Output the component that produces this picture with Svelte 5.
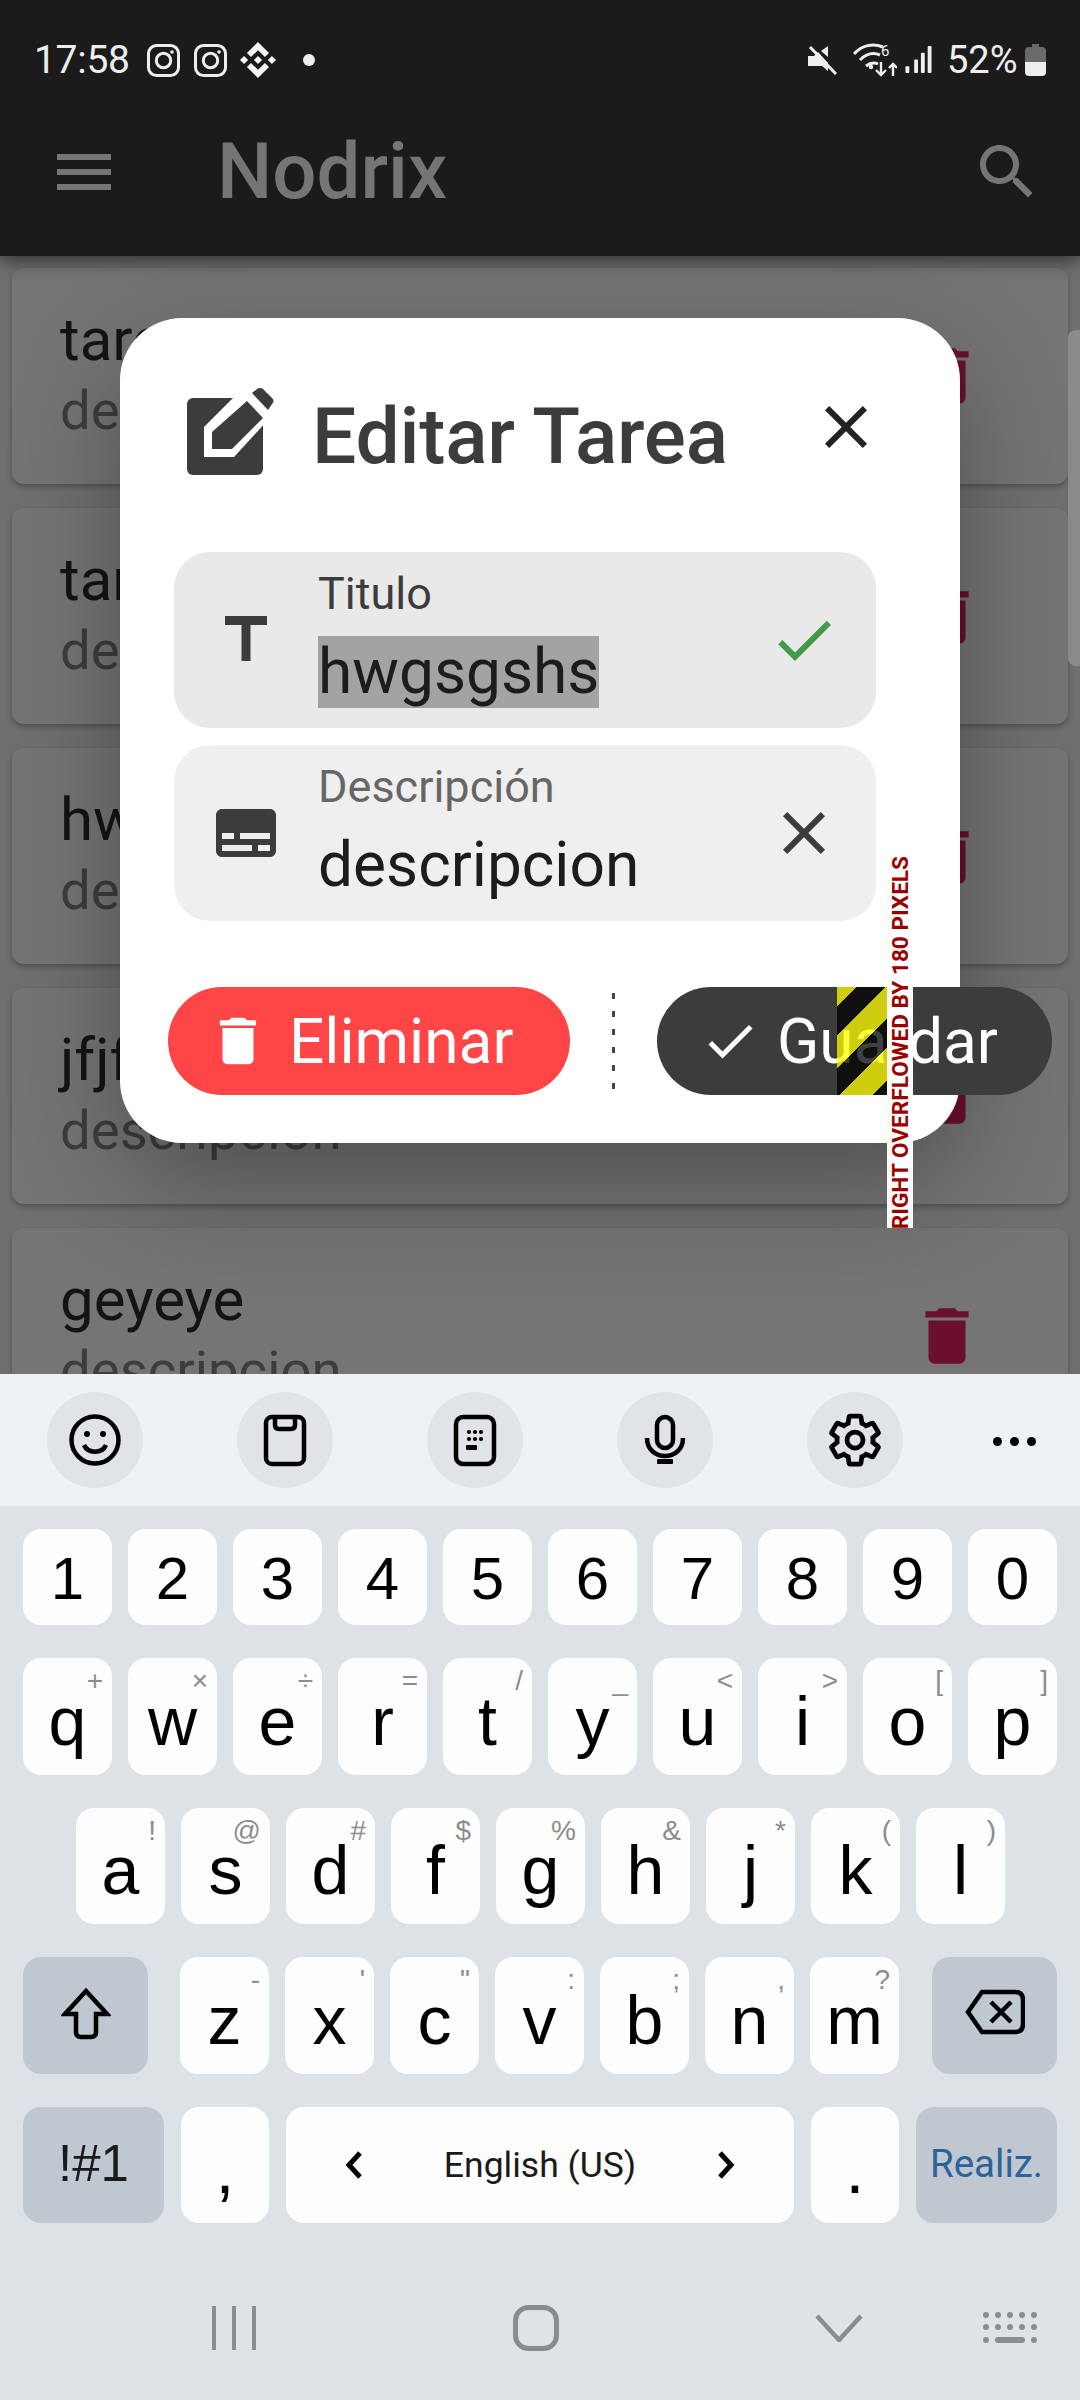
<script>
  const cards = [
    ['tarea', 'descripcion'],
    ['tarea', 'descripcion'],
    ['hwgsgshs', 'descripcion'],
    ['jfjfjfj', 'descripcion'],
    ['geyeye', 'descripcion']
  ];
  const digits = ['1','2','3','4','5','6','7','8','9','0'];
  const row2 = [['q','+'],['w','×'],['e','÷'],['r','='],['t','/'],['y','_'],['u','<'],['i','>'],['o','['],['p',']']];
  const row3 = [['a','!'],['s','@'],['d','#'],['f','$'],['g','%'],['h','&'],['j','*'],['k','('],['l',')']];
  const row4 = [['z','-'],['x',"'"],['c','"'],['v',':'],['b',';'],['n',','],['m','?']];
  const del = 'M6 19c0 1.1.9 2 2 2h8c1.1 0 2-.9 2-2V7H6v12zM19 4h-3.5l-1-1h-5l-1 1H5v2h14V4z';
  const close = 'M19 6.41L17.59 5 12 10.59 6.41 5 5 6.41 10.59 12 5 17.59 6.41 19 12 13.41 17.59 19 19 17.59 13.41 12z';
  const check = 'M9 16.17L4.83 12l-1.42 1.41L9 19 21 7l-1.41-1.41z';
</script>

<div class="screen">
  <div class="top">
    <header class="appbar">
      <div class="status">
        <div class="status-left">
          <span class="time">17:58</span>
          {#each [0, 1] as i (i)}
            <svg class="insta" viewBox="0 0 33 33"><rect x="1.5" y="1.5" width="30" height="30" rx="8"/><circle cx="16.5" cy="16.5" r="7.2"/><circle class="dot" cx="25" cy="8" r="1.8"/></svg>
          {/each}
          <svg class="binance" viewBox="0 0 24 24"><path d="M16.624 13.9202l2.7175 2.7154-7.353 7.353-7.353-7.352 2.7175-2.7164 4.6355 4.6595 4.6356-4.6595zm4.6366-4.6366L24 12l-2.7154 2.7164L18.5682 12l2.6924-2.7164zm-9.272.001l2.7163 2.6914-2.7164 2.7174v-.001L9.2721 12l2.7164-2.7154zm-9.2722-.001L5.4088 12l-2.6914 2.6924L0 12l2.7164-2.7164zM11.9885.0115l7.353 7.329-2.7174 2.7154-4.6356-4.6356-4.6355 4.6595-2.7174-2.7154 7.353-7.353z"/></svg>
          <span class="notif-dot"></span>
        </div>
        <div class="status-right">
          <svg class="mute" viewBox="0 0 30 30"><path class="fill" d="M0 11h6l4-4 10 11v8l-6-5H0zM13 6l7-5v11z"/><path class="slash" d="M2 2l26 27"/></svg>
          <svg class="wifi" viewBox="0 0 44 36"><path class="arc" d="M1 12C9 3 20 1 30 5M7 18c6-6 13-8 20-5M13 24c4-3 8-4 12-2"/><circle class="fill" cx="18" cy="25" r="2.2"/><text class="six" x="28" y="14">6</text><path class="arc thin" d="M28 20v13M23 28l5 5 5-5M40 34V22M36 26l4-4 4 4"/></svg>
          <svg class="signal" viewBox="0 0 27 29"><rect x="0" y="21" width="4" height="7" rx="1"/><rect x="9" y="14" width="4" height="14" rx="1"/><rect x="16" y="7" width="4" height="21" rx="1"/><rect x="23" y="0" width="4" height="28" rx="1"/></svg>
          <span class="pct">52%</span>
          <svg class="battery" viewBox="0 0 21 32"><path class="empty" d="M7 0h7v3h3a4 4 0 0 1 4 4v11H0V7a4 4 0 0 1 4-4h3z"/><path class="fill" d="M0 18h21v10a4 4 0 0 1-4 4H4a4 4 0 0 1-4-4z"/></svg>
        </div>
      </div>
      <div class="toolbar-app">
        <svg class="hdr-icon" viewBox="0 0 24 24"><path d="M3 18h18v-2H3v2zm0-5h18v-2H3v2zm0-7v2h18V6H3z"/></svg>
        <span class="brand">Nodrix</span>
        <svg class="hdr-icon search" viewBox="0 0 24 24"><path d="M15.5 14h-.79l-.28-.27C15.41 12.59 16 11.11 16 9.5 16 5.91 13.09 3 9.5 3S3 5.91 3 9.5 5.91 16 9.5 16c1.61 0 3.09-.59 4.23-1.57l.27.28v.79l5 4.99L20.49 19l-4.99-5zm-6 0C7.01 14 5 11.99 5 9.5S7.01 5 9.5 5 14 7.01 14 9.5 11.99 14 9.5 14z"/></svg>
      </div>
    </header>

    <main class="list">
      {#each cards as c, i (i)}
        <article class="card">
          <div class="card-text">
            <span class="card-title">{c[0]}</span>
            <span class="card-desc">{c[1]}</span>
          </div>
          <svg class="card-del" viewBox="0 0 24 24"><path d={del}/></svg>
        </article>
      {/each}
    </main>

    <div class="thumb"></div>

    <section class="dialog">
      <div class="dlg-head">
        <svg class="dlg-icon" viewBox="0 0 90 90">
          <rect class="box" x="0" y="12" width="76" height="77" rx="6"/>
          <path class="pen-white" d="M17 71V41L62 -4l28 28L47 71z"/>
          <path class="box" d="M25 63V46L60 15l16 17-31 31z"/>
          <path class="box" d="M65 7l5-4q3-2 6 0l9 9q3 3 0 6l-4 6z"/>
        </svg>
        <h2 class="dlg-title">Editar Tarea</h2>
        <svg class="dlg-close" viewBox="0 0 24 24"><path d={close}/></svg>
      </div>

      <div class="field focus">
        <svg class="f-icon" viewBox="0 0 24 24"><path d="M5 4v3h5.5v12h3V7H19V4z"/></svg>
        <div class="f-body">
          <span class="f-label">Titulo</span>
          <span class="f-value"><span class="sel">hwgsgshs</span></span>
        </div>
        <svg class="f-trail ok" viewBox="0 0 24 24"><path d={check}/></svg>
      </div>

      <div class="field">
        <svg class="f-icon" viewBox="0 0 24 24"><path d="M20 4H4c-1.1 0-2 .9-2 2v12c0 1.1.9 2 2 2h16c1.1 0 2-.9 2-2V6c0-1.1-.9-2-2-2zM4 12h4v2H4v-2zm10 6H4v-2h10v2zm6 0h-4v-2h4v2zm0-4H10v-2h10v2z"/></svg>
        <div class="f-body">
          <span class="f-label muted">Descripción</span>
          <span class="f-value">descripcion</span>
        </div>
        <svg class="f-trail" viewBox="0 0 24 24"><path d={close}/></svg>
      </div>

      <div class="actions">
        <button class="btn danger"><svg viewBox="0 0 24 24"><path d={del}/></svg>Eliminar</button>
        <span class="divider"></span>
        <button class="btn save"><svg viewBox="0 0 24 24"><path d={check}/></svg>Guardar</button>
      </div>

      <div class="hazard"></div>
      <div class="overflow-label"><span>RIGHT OVERFLOWED BY 180 PIXELS</span></div>
    </section>
  </div>

  <div class="kb-tools">
    <div class="tool"><svg viewBox="0 0 60 60"><circle cx="30" cy="30" r="23.5"/><circle class="solid" cx="22" cy="24" r="3"/><circle class="solid" cx="38" cy="24" r="3"/><path d="M19 35c4 9 18 9 22 0"/></svg></div>
    <div class="tool"><svg viewBox="0 0 60 60"><rect x="11" y="7" width="38" height="47" rx="6"/><path d="M20 7v8q0 4 4 4h12q4 0 4-4V7"/></svg></div>
    <div class="tool"><svg viewBox="0 0 60 60"><rect x="11" y="7" width="38" height="47" rx="7"/><g class="solid"><circle cx="24" cy="22" r="2.1"/><circle cx="30" cy="22" r="2.1"/><circle cx="36" cy="22" r="2.1"/><circle cx="24" cy="29" r="2.1"/><circle cx="30" cy="29" r="2.1"/><circle cx="36" cy="29" r="2.1"/><rect x="21" y="35" width="11" height="5" rx="1"/></g></svg></div>
    <div class="tool"><svg viewBox="0 0 60 60"><rect x="22" y="7" width="16" height="31" rx="8"/><path d="M12 28c0 24 36 24 36 0"/><rect class="solid" x="22" y="49" width="16" height="5" rx="1"/></svg></div>
    <div class="tool"><svg viewBox="0 0 60 60"><g transform="scale(2.5)"><path class="gear" d="M19.14 12.94c.04-.3.06-.61.06-.94 0-.32-.02-.64-.07-.94l2.03-1.58c.18-.14.23-.41.12-.61l-1.92-3.32c-.12-.22-.37-.29-.59-.22l-2.39.96c-.5-.38-1.03-.7-1.62-.94l-.36-2.54c-.04-.24-.24-.41-.48-.41h-3.84c-.24 0-.43.17-.47.41l-.36 2.54c-.59.24-1.13.57-1.62.94l-2.39-.96c-.22-.08-.47 0-.59.22L2.74 8.87c-.12.21-.08.47.12.61l2.03 1.58c-.05.3-.09.63-.09.94s.02.64.07.94l-2.03 1.58c-.18.14-.23.41-.12.61l1.92 3.32c.12.22.37.29.59.22l2.39-.96c.5.38 1.03.7 1.62.94l.36 2.54c.05.24.24.41.48.41h3.84c.24 0 .44-.17.47-.41l.36-2.54c.59-.24 1.13-.56 1.62-.94l2.39.96c.22.08.47 0 .59-.22l1.92-3.32c.12-.22.07-.47-.12-.61l-2.01-1.58z"/><circle class="gear" cx="12" cy="12" r="3.2"/></g></svg></div>
    <div class="more"><i></i><i></i><i></i></div>
  </div>

  <div class="kb">
    <div class="krow nums">
      {#each digits as d (d)}<div class="key digit">{d}</div>{/each}
    </div>
    <div class="krow">
      {#each row2 as k (k[0])}<div class="key">{k[0]}<sup>{k[1]}</sup></div>{/each}
    </div>
    <div class="krow r3">
      {#each row3 as k (k[0])}<div class="key">{k[0]}<sup>{k[1]}</sup></div>{/each}
    </div>
    <div class="krow r4">
      <div class="key fn shift"><svg viewBox="0 0 50 52"><path d="M25 3L4 26h11v18q0 5 5 5h10q5 0 5-5V26h11z"/></svg></div>
      {#each row4 as k (k[0])}<div class="key">{k[0]}<sup>{k[1]}</sup></div>{/each}
      <div class="key fn bksp"><svg viewBox="0 0 60 46"><path d="M17 3h33q8 0 8 8v24q0 8-8 8H17L3 23z"/><path d="M26 13l20 20M46 13L26 33"/></svg></div>
    </div>
    <div class="krow r5">
      <div class="key fn sym">!#1</div>
      <div class="key punct">,</div>
      <div class="key space">
        <svg viewBox="0 0 20 28"><path d="M16 2L5 14l11 12"/></svg>
        <span>English (US)</span>
        <svg viewBox="0 0 20 28"><path d="M4 2l11 12L4 26"/></svg>
      </div>
      <div class="key punct">.</div>
      <div class="key fn done">Realiz.</div>
    </div>
  </div>

  <nav class="navbar">
    <svg class="recents" viewBox="0 0 44 46"><path d="M2 1v44M22 1v44M42 1v44"/></svg>
    <svg class="home" viewBox="0 0 46 46"><rect x="2.5" y="2.5" width="41" height="41" rx="13"/></svg>
    <svg class="back" viewBox="0 0 48 28"><path d="M2 2l22 24L46 2"/></svg>
    <svg class="kbd" viewBox="0 0 54 32"><g><circle cx="3" cy="3" r="3"/><circle cx="15" cy="3" r="3"/><circle cx="27" cy="3" r="3"/><circle cx="39" cy="3" r="3"/><circle cx="51" cy="3" r="3"/><circle cx="3" cy="15" r="3"/><circle cx="15" cy="15" r="3"/><circle cx="27" cy="15" r="3"/><circle cx="39" cy="15" r="3"/><circle cx="51" cy="15" r="3"/><circle cx="3" cy="28" r="3"/><rect x="12" y="25" width="30" height="6" rx="3"/><circle cx="51" cy="28" r="3"/></g></svg>
  </nav>
</div>

<style>
  :global(body) { margin: 0; background: #dfe3e7; }
  .screen { width: 1080px; height: 2400px; display: flex; flex-direction: column; overflow: hidden; font-family: Roboto, sans-serif; }
  .top { position: relative; height: 1374px; overflow: hidden; background: #6f6f6f; flex: none; }

  .appbar { position: relative; z-index: 1; height: 256px; background: #1b1b1b; box-shadow: 0 6px 16px rgba(0,0,0,.5); display: flex; flex-direction: column; }
  .status { height: 120px; display: flex; justify-content: space-between; align-items: center; padding: 0 34px; color: #eee; flex: none; }
  .status-left, .status-right { display: flex; align-items: center; }
  .time { font-size: 39px; width: 113px; letter-spacing: -.3px; }
  .insta { width: 33px; height: 33px; margin-right: 14px; fill: none; stroke: #eee; stroke-width: 3; }
  .insta .dot { fill: #eee; stroke: none; }
  .binance { width: 36px; height: 36px; fill: #f4f4f4; margin-left: -1px; }
  .notif-dot { width: 12px; height: 12px; border-radius: 50%; background: #eee; margin-left: 27px; }
  .mute { width: 30px; height: 30px; }
  .mute .fill, .wifi .fill { fill: #eee; }
  .mute .slash { stroke: #eee; stroke-width: 3; fill: none; }
  .wifi { width: 44px; height: 36px; margin-left: 15px; }
  .wifi .arc { fill: none; stroke: #eee; stroke-width: 3; }
  .wifi .thin { stroke-width: 2.4; }
  .wifi .six { font-size: 15px; fill: #eee; font-family: Roboto, sans-serif; }
  .signal { width: 27px; height: 28px; fill: #eee; margin-left: 8px; }
  .pct { font-size: 38px; margin-left: 15px; width: 78px; }
  .battery { width: 21px; height: 32px; }
  .battery .empty { fill: #6a6a6a; }
  .battery .fill { fill: #eee; }

  .toolbar-app { position: relative; display: flex; align-items: center; padding-left: 48px; height: 104px; }
  .hdr-icon { width: 72px; height: 72px; fill: #757575; flex: none; }
  .brand { margin-left: 97px; font-size: 78px; font-weight: 500; color: #757575; line-height: 1; }
  .search { margin-left: auto; margin-right: 37px; }

  .list { display: flex; flex-direction: column; gap: 24px; padding: 12px 12px 0; }
  .card { height: 216px; flex: none; background: #757575; border-radius: 12px; box-shadow: 0 3px 5px rgba(0,0,0,.25); display: flex; align-items: center; justify-content: space-between; padding: 0 84px 0 48px; box-sizing: border-box; }
  .card-text { display: flex; flex-direction: column; gap: 3px; align-self: flex-start; padding-top: 36px; }
  .card-title { font-size: 60px; color: #141414; }
  .card-desc { font-size: 54.5px; color: #3d3d3d; }
  .card-del { width: 74px; height: 74px; fill: #6b0f2d; flex: none; }
  .thumb { position: absolute; right: 0; top: 330px; width: 12px; height: 336px; background: #8b8b8b; border-radius: 8px 0 0 8px; }

  .dialog { position: absolute; left: 120px; top: 318px; width: 840px; height: 825px; background: #fff; border-radius: 62px; box-shadow: 0 40px 110px rgba(0,0,0,.32); z-index: 2; box-sizing: border-box; padding: 0 84px 0 54px; display: flex; flex-direction: column; }
  .dlg-head { display: flex; align-items: flex-start; height: 234px; flex: none; padding-left: 13px; }
  .dlg-icon { width: 90px; height: 90px; margin-top: 68px; flex: none; }
  .dlg-icon .box { fill: #3c3c3c; }
  .dlg-icon .pen-white { fill: #fff; }
  .dlg-title { margin: 0 0 0 35px; font-size: 78.5px; font-weight: 500; color: #3c3c3c; white-space: nowrap; letter-spacing: -.2px; line-height: 86px; padding-top: 75px; height: 86px; }
  .dlg-close { position: absolute; left: 690px; top: 73px; width: 72px; height: 72px; fill: #222; }

  .field { height: 176px; flex: none; border-radius: 36px; background: #efefef; display: flex; align-items: center; margin-bottom: 17px; position: relative; padding-left: 36px; box-sizing: border-box; }
  .field.focus { background: #e9e9e9; }
  .f-icon { width: 72px; height: 72px; fill: #3c3c3c; flex: none; }
  .f-body { display: flex; flex-direction: column; margin-left: 36px; align-self: flex-start; padding-top: 15px; }
  .f-label { font-size: 45px; color: #3c3c3c; line-height: 53px; }
  .f-label.muted { color: #666; }
  .f-value { font-size: 62.2px; color: #1c1c1c; line-height: 72px; margin-top: 16px; white-space: nowrap; }
  .sel { background: #a3a3a3; display: inline-block; line-height: 72px; }
  .f-trail { position: absolute; left: 594px; top: 52px; width: 72px; height: 72px; fill: #3c3c3c; }
  .f-trail.ok { fill: #45994b; }

  .actions { display: flex; align-items: center; margin-top: 49px; margin-left: -6px; height: 108px; flex: none; width: 900px; }
  .btn { height: 108px; border: 0; border-radius: 54px; color: #fff; font: 400 62.2px Roboto, sans-serif; display: flex; align-items: center; flex: none; padding: 0; box-sizing: border-box; white-space: nowrap; }
  .danger { width: 402px; background: #ff4545; padding-left: 39px; }
  .danger svg { width: 62px; height: 62px; fill: #fff; margin-right: 20px; }
  .save { width: 395px; background: #3c3c3c; padding-left: 43px; }
  .save svg { width: 60px; height: 60px; fill: #fff; margin-right: 17px; }
  .divider { width: 3px; height: 97px; margin: 0 42px; flex: none; background: repeating-linear-gradient(to bottom, #444 0 6px, transparent 6px 18px); }

  .hazard { position: absolute; left: 717px; top: 669px; width: 50px; height: 108px; background: repeating-linear-gradient(135deg, rgba(255,255,0,.75) -9.2px 14.1px, rgba(0,0,0,.75) 14.1px 34.6px); }
  .overflow-label { position: absolute; left: 767px; top: 539px; width: 26px; height: 371px; background: #fff; display: flex; align-items: center; justify-content: center; }
  .overflow-label span { writing-mode: vertical-rl; transform: rotate(180deg); white-space: nowrap; font: 700 22.6px Roboto, sans-serif; color: #990000; }

  .kb-tools { height: 132px; flex: none; background: #eef2f5; display: flex; align-items: center; padding-left: 47px; gap: 94px; position: relative; box-sizing: border-box; }
  .tool { width: 96px; height: 96px; border-radius: 50%; background: #e0e3e8; display: flex; align-items: center; justify-content: center; }
  .tool svg { width: 60px; height: 60px; fill: none; stroke: #000; stroke-width: 4.5; }
  .tool .solid { fill: #000; stroke: none; }
  .tool .gear { stroke-width: 1.9; fill: none; }
  .more { position: absolute; left: 993px; top: 63px; display: flex; gap: 8px; }
  .more i { width: 9px; height: 9px; border-radius: 50%; background: #000; display: block; }

  .kb { background: #dde2e7; height: 760px; flex: none; padding-top: 23px; box-sizing: border-box; font-family: "Liberation Sans", Arial, sans-serif; }
  .krow { display: flex; gap: 16px; padding: 0 23px; margin-bottom: 33px; height: 117px; box-sizing: border-box; }
  .krow.nums { height: 96px; }
  .r3 { padding-left: 76px; margin-bottom: 33px; height: 116px; }
  .r5 { height: 116px; gap: 17px; }
  .key { position: relative; width: 89px; flex: none; border-radius: 18px; background: #fdfdfd; color: #000; font-size: 68px; line-height: 1; display: flex; align-items: flex-end; justify-content: center; padding-bottom: 20px; box-sizing: border-box; }
  .key.digit { font-size: 60px; padding-bottom: 16px; }
  .key sup { position: absolute; right: 9px; top: 6px; font-size: 28px; line-height: 1.2; color: #8c8c8c; }
  .fn { background: #bfc7d1; }
  .shift { width: 125px; margin-right: 16px; align-items: center; padding: 0 0 4px; }
  .shift svg { width: 50px; height: 52px; fill: none; stroke: #000; stroke-width: 4.5; }
  .bksp { width: 125px; margin-left: 17px; align-items: center; padding: 0 0 8px; }
  .bksp svg { width: 60px; height: 46px; fill: none; stroke: #000; stroke-width: 4.5; }
  .sym { width: 141px; font-size: 51px; align-items: center; padding: 0 0 4px; color: #1a1a1a; }
  .punct { width: 88px; }
  .space { width: 508px; justify-content: space-between; align-items: center; padding: 0 58px; }
  .space svg { width: 20px; height: 28px; fill: none; stroke: #000; stroke-width: 5; }
  .space span { font: 400 35.5px Roboto, sans-serif; color: #1a1a1a; }
  .done { width: 141px; align-items: center; padding: 0 0 4px; font: 400 38.5px Roboto, sans-serif; color: #2d6399; }

  .navbar { flex: none; height: 134px; display: flex; align-items: center; background: #dfe3e7; padding: 0 0 10px 212px; box-sizing: border-box; }
  .navbar svg { flex: none; fill: none; stroke: #8a8d90; }
  .recents { width: 44px; height: 46px; stroke-width: 4; }
  .home { width: 46px; height: 46px; margin-left: 257px; stroke-width: 5; }
  .back { width: 48px; height: 28px; margin-left: 256px; stroke-width: 4.5; }
  .kbd { width: 54px; height: 32px; margin-left: 120px; }
  .navbar .kbd { stroke: none; fill: #8a8d90; }
</style>
